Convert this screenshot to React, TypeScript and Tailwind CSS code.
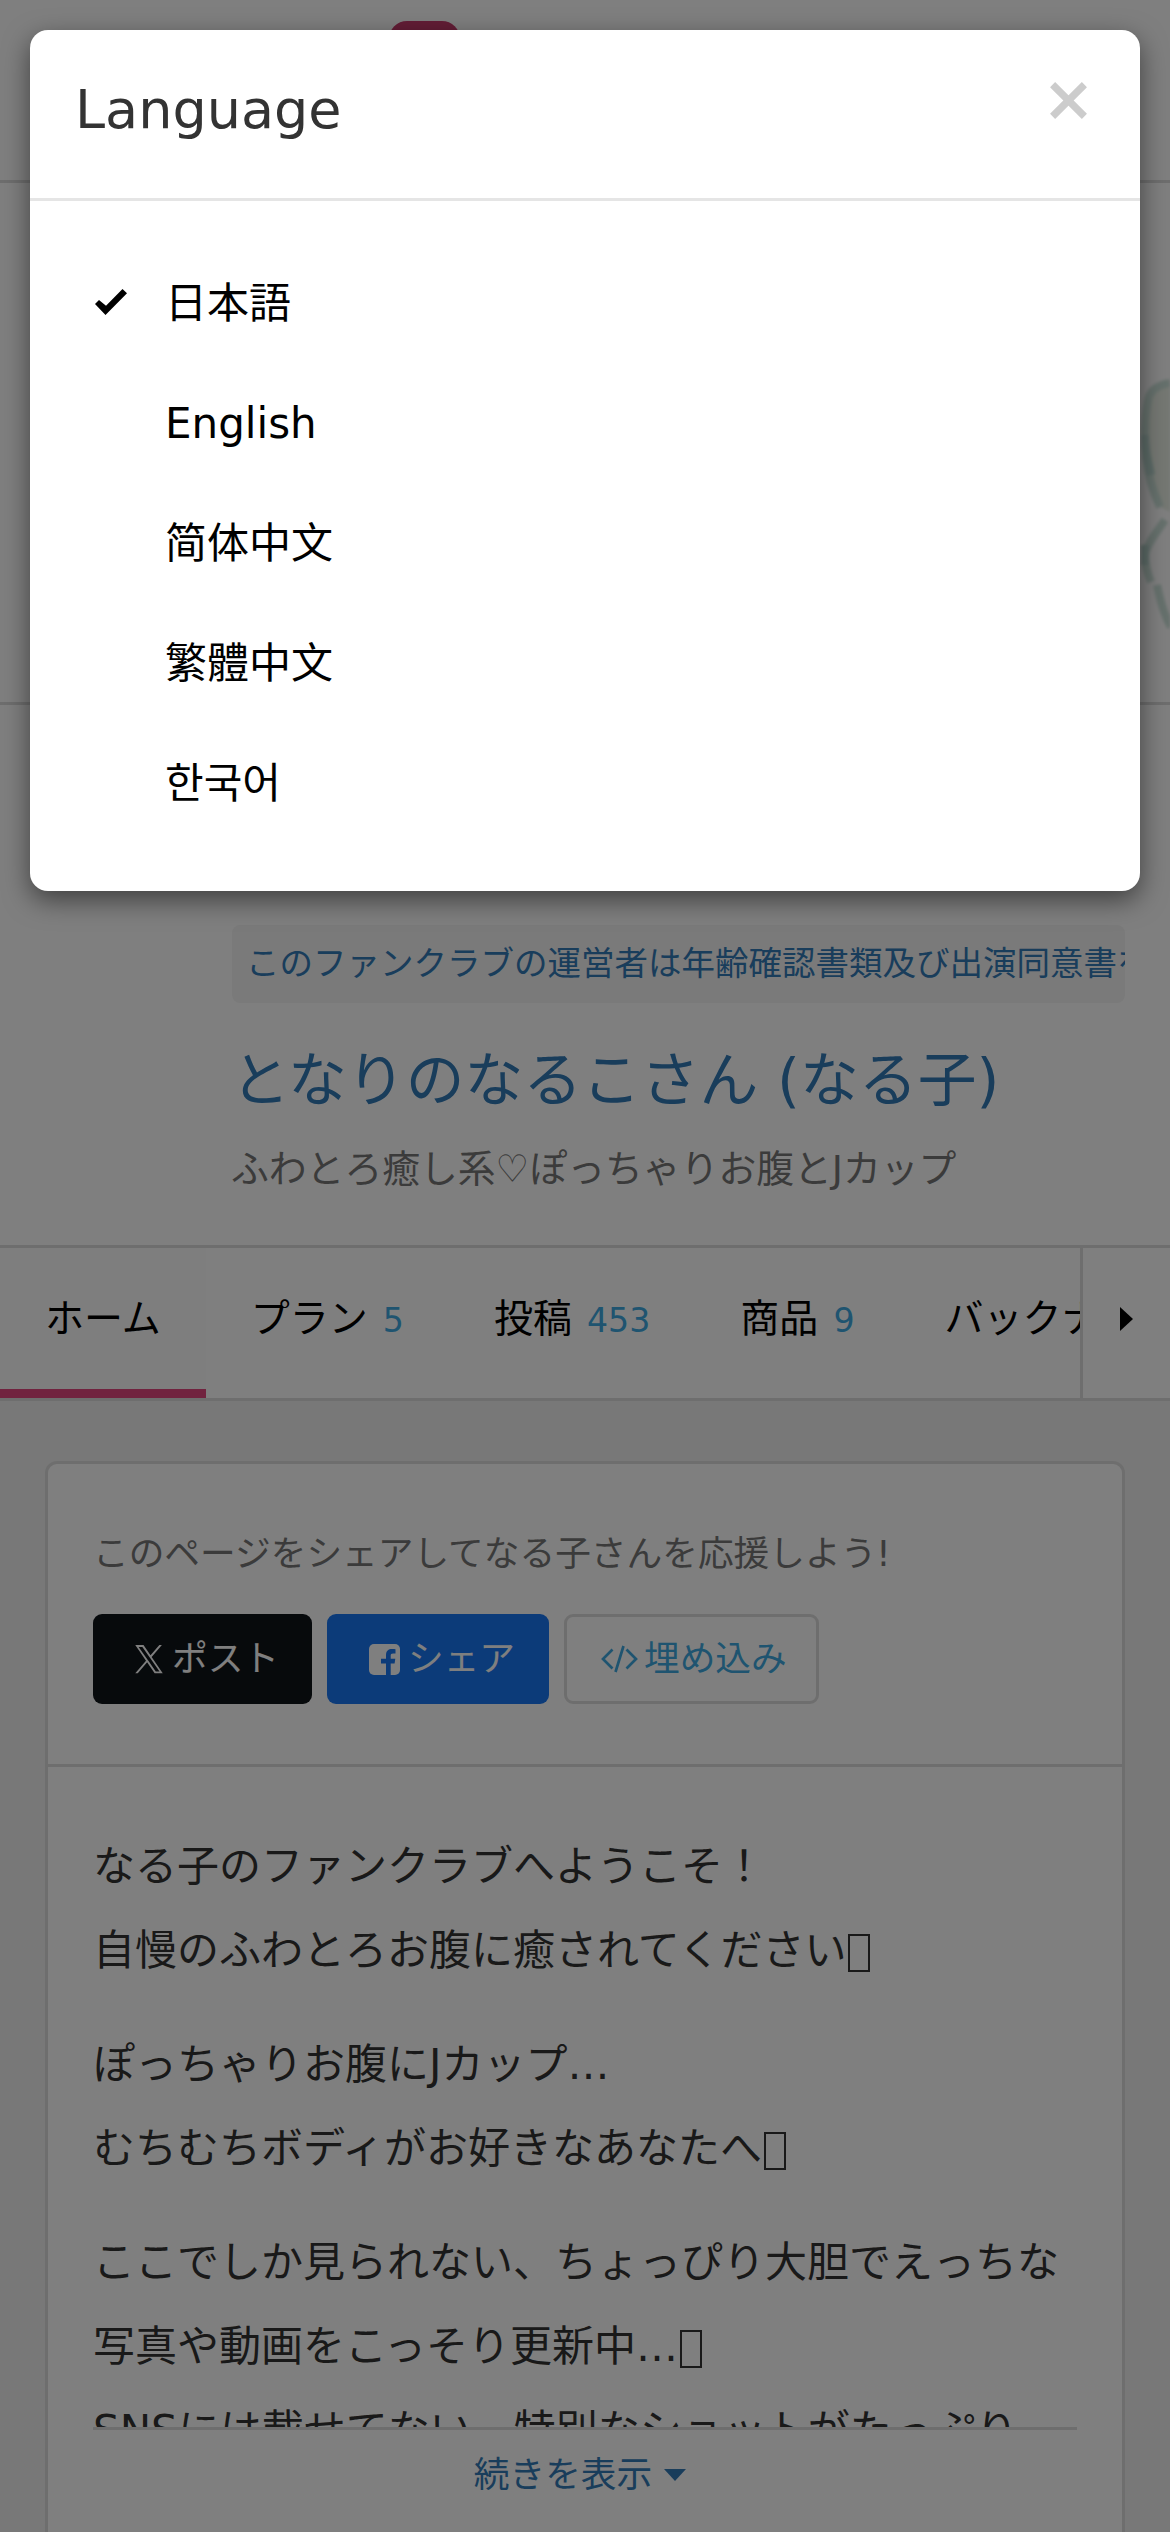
import React, { useState } from "react";
import clsx from "clsx";

type Language = {
  label: string;
  code: string;
  font?: string;
};

type Tab = {
  label: string;
  count?: number;
};

type Line = {
  text: string;
  missingGlyph?: boolean;
};

const languages: Language[] = [
  { label: "日本語", code: "ja" },
  { label: "English", code: "en" },
  { label: "简体中文", code: "zh-CN", font: "font-['DejaVu_Sans','Noto_Sans_CJK_SC',sans-serif]" },
  { label: "繁體中文", code: "zh-TW", font: "font-['DejaVu_Sans','Noto_Sans_CJK_TC',sans-serif]" },
  { label: "한국어", code: "ko", font: "font-['DejaVu_Sans','Noto_Sans_CJK_KR',sans-serif]" }
];

const tabs: Tab[] = [
  { label: "ホーム" },
  { label: "プラン", count: 5 },
  { label: "投稿", count: 453 },
  { label: "商品", count: 9 },
  { label: "バックナンバー" }
];

const paragraphs: Line[][] = [
  [
    { text: "なる子のファンクラブへようこそ！" },
    { text: "自慢のふわとろお腹に癒されてください", missingGlyph: true }
  ],
  [
    { text: "ぽっちゃりお腹にJカップ…" },
    { text: "むちむちボディがお好きなあなたへ", missingGlyph: true }
  ],
  [
    { text: "ここでしか見られない、ちょっぴり大胆でえっちな" },
    { text: "写真や動画をこっそり更新中…", missingGlyph: true },
    { text: "SNSには載せてない、特別なショットがたっぷり" }
  ]
];

function CheckIcon() {
  return (
    <svg viewBox="0 0 32 25" preserveAspectRatio="none" className="mb-0.5 h-[26px] w-8" fill="currentColor">
      <path d="M0 14.500 4 10.500 11 16 27.500 0 32 4 10.500 25Z" />
    </svg>
  );
}

function CloseIcon() {
  return (
    <svg viewBox="0 0 37 37" className="size-[37px]" stroke="currentColor" strokeWidth="7.2">
      <path d="M2.6 2.6 34.4 34.4M34.4 2.6 2.6 34.4" />
    </svg>
  );
}

function XIcon() {
  return (
    <svg viewBox="0 0 24 24" className="h-[30px] w-[30px]" fill="currentColor">
      <path d="M14.1 10.3 22.3.8h-2L13.2 9 7.6.8H1l8.6 12.5L1 23.3h2l7.5-8.8 6 8.8H23zM11.5 13.400l-.9-1.200L3.700 2.300h3l5.600 8 .9 1.200 7.200 10.400h-3z" />
    </svg>
  );
}

function FacebookIcon() {
  return (
    <svg viewBox="0 0 31 31" className="size-[31px]">
      <rect width="31" height="31" rx="5" fill="#fff" />
      <path d="M17 31V19.500h-5v-4.700h5v-3.600C17 6.800 19.500 5 23 5c1.500 0 2.700.1 3.500.2v4.300h-2.400c-1.900 0-2.400.9-2.400 2.300v3h4.600l-.7 4.700h-3.900V31z" fill="#1877f2" />
    </svg>
  );
}

function CodeIcon() {
  return (
    <svg viewBox="0 0 37 28" className="h-7 w-[37px]" fill="none" stroke="currentColor" strokeWidth="2.700">
      <path d="M11.500 4.500 2 14l9.500 9.500M25.500 4.500 35 14l-9.500 9.500M22.500 1l-8 26" />
    </svg>
  );
}

function Masthead() {
  return (
    <>
      <header className="h-[183px] border-b-[3px] border-[#ddd] pt-[21px] pl-[389px]">
        <div className="h-[70px] w-[71px] rounded-[18px] bg-[#c63a6c]" />
      </header>
      <div className="flex h-[522px] justify-end border-b-[3px] border-[#ddd]">
        {/* cover illustration */}
        <svg viewBox="0 0 40 362" className="mt-[157px] h-[362px] w-10 blur-[1.5px]" fill="none">
          <path d="M40 43C28 45 20 50 18 60 13 85 15 105 16 118c4 20 8 38 14 49l10 5z" fill="#eaf1e6" />
          <path
            d="M40 43C28 45 20 50 18 60 13 85 15 105 16 118c2 18 8 36 14 49M35 180c-7 10-19 25-20 35 0 12 3 20 6 27M27 245c3 15 7 30 14 42"
            stroke="#cde2da"
            strokeWidth="8"
          />
          <path d="M15 95c0 20 4 28 6 40M15 205v20" stroke="#b9d6cf" strokeWidth="8" />
        </svg>
      </div>
    </>
  );
}

function Profile() {
  return (
    <section className="h-[540px] pt-[220px] pr-[45px] pl-[232px]">
      <div className="h-[78px] overflow-hidden rounded-lg bg-[#f5f5f5] pl-[14px] text-[33.5px] leading-[78px] whitespace-nowrap text-[#337ab7]">
        このファンクラブの運営者は年齢確認書類及び出演同意書を提出しています
      </div>
      <h1 className="mt-[37px] -ml-px text-[58.8px] leading-[82px] text-[#337ab7]">となりのなるこさん (なる子)</h1>
      <p className="mt-[17px] -ml-px text-[37.8px] leading-[60px] whitespace-nowrap text-[#777]">
        ふわとろ癒し系♡ぽっちゃりお腹とJカップ
      </p>
    </section>
  );
}

function TabBar() {
  return (
    <nav className="flex h-[156px] border-y-[3px] border-[#ddd]">
      <div className="flex w-[1080px] overflow-hidden">
        {tabs.map((tab, i) => (
          <a
            key={tab.label}
            className={clsx(
              "shrink-0 px-[45px] text-[39px] leading-[141px] whitespace-nowrap text-black",
              i === 0 && "border-b-9 border-[#e2477f] bg-[#fdfdfd]"
            )}
          >
            {tab.label}
            {tab.count !== undefined && (
              <span className="pl-[15px] text-[33.2px] text-[#3fa9e0]">{tab.count}</span>
            )}
          </a>
        ))}
      </div>
      <button className="flex flex-1 items-center border-l-[3px] border-[#ddd] pb-2 pl-[37px]">
        <svg viewBox="0 0 13 24" className="h-6 w-[13px]">
          <path d="M0 0 13 12 0 24Z" />
        </svg>
      </button>
    </nav>
  );
}

function ShareBox() {
  return (
    <div className="h-[303px] border-b-[3px] border-[#ddd] px-[45px] pt-[60px]">
      <p className="text-[35.7px] leading-[60px] text-[#777]">このページをシェアしてなる子さんを応援しよう!</p>
      <div className="mt-[30px] flex gap-[15px] text-[35.7px] leading-[84px]">
        <button className="flex h-[90px] w-[219px] items-center gap-2 rounded-[9px] bg-[#0f1419] pl-[41px] text-white">
          <XIcon />
          ポスト
        </button>
        <button className="flex h-[90px] w-[222px] items-center gap-2 rounded-[9px] bg-[#1877f2] pl-[42px] text-white">
          <FacebookIcon />
          シェア
        </button>
        <button className="flex h-[90px] w-[255px] items-center gap-1.5 rounded-[9px] border-[3px] border-[#ddd] pl-[34px] text-[#3fa9e0]">
          <CodeIcon />
          埋め込み
        </button>
      </div>
    </div>
  );
}

function Introduction() {
  return (
    <div className="px-[45px] pt-[58px]">
      <div className="flex h-[602px] flex-col gap-[30px] overflow-hidden text-[42px] leading-[84px] whitespace-nowrap text-[#333]">
        {paragraphs.map((lines) => (
          <div key={lines[0].text}>
            {lines.map(({ text, missingGlyph }) => (
              <p key={text} className="flex h-[84px] items-center">
                {text}
                {missingGlyph && <span className="mt-1 ml-0.5 h-[38px] w-[22px] border-2 border-[#333]" />}
              </p>
            ))}
          </div>
        ))}
      </div>
      <div className="flex items-center justify-center gap-3 border-t-[3px] border-[#ddd] pt-3 pr-2.5 text-[35.7px] leading-[66px] text-[#337ab7]">
        続きを表示
        <svg viewBox="0 0 22 12" className="h-3 w-[22px]" fill="currentColor">
          <path d="M0 0h22L11 12Z" />
        </svg>
      </div>
    </div>
  );
}

function LanguageModal() {
  const [current, setCurrent] = useState("ja");

  return (
    <div className="absolute inset-0 bg-black/50 p-[30px]">
      <div className="h-[861px] rounded-[18px] bg-white shadow-[0_9px_27px_rgba(0,0,0,0.5)]">
        <div className="flex h-[171px] items-start justify-between border-b-[3px] border-[#e5e5e5] pr-[53px] pl-[45px]">
          <h4 className="pt-[41px] text-[54px] leading-[77px] text-[#333]">Language</h4>
          <button className="mt-[52px] text-[#ccc]">
            <CloseIcon />
          </button>
        </div>
        <ul className="pt-[42px]">
          {languages.map(({ label, code, font }) => (
            <li key={code}>
              <button
                onClick={() => setCurrent(code)}
                className="flex h-[120px] w-full items-center pl-[65px] text-[42px] leading-[60px] text-black"
              >
                <span className="w-[70px]">{current === code && <CheckIcon />}</span>
                <span lang={code} className={clsx("pt-px", font)}>{label}</span>
              </button>
            </li>
          ))}
        </ul>
      </div>
    </div>
  );
}

export default function App() {
  return (
    <div className="relative h-[2532px] w-[1170px] overflow-hidden bg-[#f0f0f0] font-['DejaVu_Sans','Noto_Sans_CJK_JP',sans-serif]">
      <div className="bg-white">
        <Masthead />
        <Profile />
        <TabBar />
      </div>
      <main className="mx-[45px] mt-[60px] h-[1200px] rounded-xl border-[3px] border-[#ddd] bg-white">
        <ShareBox />
        <Introduction />
      </main>
      <LanguageModal />
    </div>
  );
}
